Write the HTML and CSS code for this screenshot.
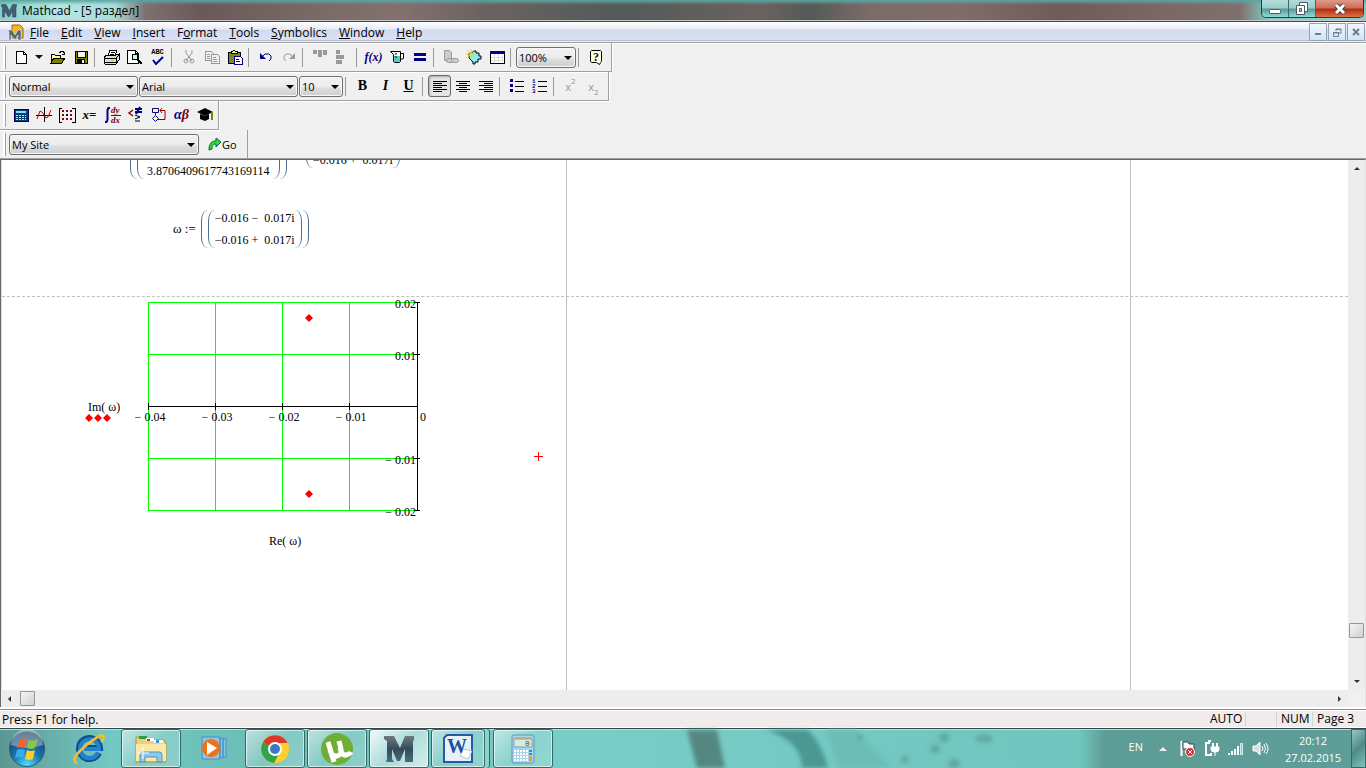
FILE: index.html
```
<!DOCTYPE html>
<html lang="en">
<head>
    <meta charset="UTF-8">
    <meta name="viewport" content="width=device-width, initial-scale=1.0">
    <title>Mathcad - [5 раздел]</title>
    <link rel="stylesheet" href="styles.css">
</head>
<body>
    <header class="titlebar">
        <svg class="app-icon" width="16" height="16" viewBox="0 0 32 30"><path d="M1 2h9l7 13 6-13h8v4l-1 2v19h-7V14l-6 12h-3L7 14v13H3V7L1 6z" fill="#3f6173" stroke="#28414e"/></svg>
        <h1>Mathcad - [5 раздел]</h1>
        <div class="window-buttons">
            <button class="wb" aria-label="Minimize"><svg width="14" height="12" viewBox="0 0 14 12"><rect x="1.500" y="6.500" width="11" height="4" rx="1" fill="#fff" stroke="#4b5a66"/></svg></button>
            <button class="wb" aria-label="Restore"><svg width="14" height="13" viewBox="0 0 14 13"><path d="M4.500.5h8v9h-8z" fill="#fff" stroke="#4b5a66"/><path d="M1.500 3.500h8v9h-8z" fill="#fff" stroke="#4b5a66"/><path d="M4.500 6.500h2v3h-2z" fill="#7fb" stroke="#4b5a66"/></svg></button>
            <button class="wb wb-close" aria-label="Close"><svg width="14" height="12" viewBox="0 0 14 12"><path d="M3 2l8 8M11 2l-8 8" stroke="#4b3a46" stroke-width="5"/><path d="M3 2l8 8M11 2l-8 8" stroke="#fff" stroke-width="3"/></svg></button>
        </div>
    </header>

    <nav class="menubar">
        <svg class="doc-icon" width="17" height="17" viewBox="0 0 17 17"><path d="M5 1h8l3 3v10H5z" fill="#f7b321" stroke="#9c6a05"/><path d="M1 6h4l3 5 3-5h3v10h-3v-5l-3 5-4-5v5H2V8z" fill="#4f6875" stroke="#e8eef0" stroke-width=".6"/></svg>
        <a href="#"><u>F</u>ile</a>
        <a href="#"><u>E</u>dit</a>
        <a href="#"><u>V</u>iew</a>
        <a href="#"><u>I</u>nsert</a>
        <a href="#">F<u>o</u>rmat</a>
        <a href="#"><u>T</u>ools</a>
        <a href="#"><u>S</u>ymbolics</a>
        <a href="#"><u>W</u>indow</a>
        <a href="#"><u>H</u>elp</a>
        <div class="mdi-buttons">
            <button aria-label="Minimize document"><svg width="8" height="8"><path d="M1 5h6v2H1z" fill="#6c7f92"/></svg></button>
            <button aria-label="Restore document"><svg width="9" height="9" fill="none" stroke="#6c7f92"><path d="M3 3V1h5v4H6M3 1.500h5M.5 4.500h5v4h-5zM.5 5h5"/></svg></button>
            <button aria-label="Close document"><svg width="8" height="8"><path d="M1 1l6 6M7 1L1 7" stroke="#6c7f92" stroke-width="2"/></svg></button>
        </div>
    </nav>

    <main>
        <div class="toolbars">
            <!-- standard -->
            <div class="toolbar w-standard">
                <button class="tb" aria-label="New"><svg width="16" height="16" class="px"><path d="M3 2h7l3 3v9H3z" fill="#fff" stroke="#000"/><path d="M10 2v3h3" fill="none" stroke="#000"/></svg></button>
                <button class="tb tb-drop" aria-label="New from template"><i class="arrow"></i></button>
                <button class="tb" aria-label="Open"><svg width="16" height="16" class="px"><path d="M1 13V5h3l1 1h5v3" fill="#ffffa0" stroke="#000"/><path d="M1 14l3-5h11l-3 5z" fill="#808000" stroke="#000"/><path d="M9 3h1V2h3v1h1v3M12 5h3" fill="none" stroke="#000"/></svg></button>
                <button class="tb" aria-label="Save"><svg width="16" height="16" class="px"><path d="M2 2h12v12H2z" fill="#808000" stroke="#000"/><path d="M4 2h8v6H4z" fill="#f0f0f0" stroke="#000"/><path d="M4 10h8v4H4z"/><path d="M9 11h2v3H9z" fill="#eee"/></svg></button>
                <span class="sep"></span>
                <button class="tb" aria-label="Print"><svg width="17" height="16" class="px"><path d="M5 7l2-6h7l-2 6" fill="#fff" stroke="#000"/><path d="M8 3h4M7 5h4" stroke="#000"/><path d="M1 8l3-2h9l3-1v6l-3 4H2l-1-2z" fill="#ddd" stroke="#000"/><path d="M1 9h12v4H2M13 9l3-3" fill="none" stroke="#000"/><path d="M8 11h3" stroke="#cc0" /></svg></button>
                <button class="tb" aria-label="Print Preview"><svg width="17" height="16" class="px"><path d="M1 1h8l3 3v10H1z" fill="#fff" stroke="#000"/><path d="M9 1v3h3" fill="none" stroke="#000"/><circle cx="9" cy="8" r="3" fill="#bff" stroke="#000"/><path d="M11 10l5 5" stroke="#000" stroke-width="2"/></svg></button>
                <button class="tb tb-spell" aria-label="Spelling"><span>ABC</span><svg width="12" height="10"><path d="M1 4l3 4 7-7" fill="none" stroke="#000080" stroke-width="2"/></svg></button>
                <span class="sep"></span>
                <button class="tb" aria-label="Cut"><svg width="16" height="16" fill="none" stroke="#999"><path d="M5 1v3l6 8M11 1v3L5 12"/><circle cx="5" cy="12" r="2"/><circle cx="11" cy="12" r="2"/></svg></button>
                <button class="tb" aria-label="Copy"><svg width="16" height="16" class="px"><g fill="#f0f0f0" stroke="#999"><path d="M1 2h6l2 2v7H1z"/><path d="M7 5h6l2 2v7H7z"/><path d="M3 5h3M3 7h3M3 9h3M9 8h3M9 10h4M9 12h4"/></g></svg></button>
                <button class="tb" aria-label="Paste"><svg width="16" height="16" class="px"><path d="M1 3h12v11H1z" fill="#808040" stroke="#000"/><path d="M4 4V2h2l1-1 1 1h2v2z" fill="#ff6" stroke="#000"/><path d="M7 7h6l2 2v6H7z" fill="#fff" stroke="#000080"/><path d="M9 10h3M9 12h4" stroke="#000080"/></svg></button>
                <span class="sep"></span>
                <button class="tb" aria-label="Undo"><svg width="16" height="16"><path d="M2 4v6h6z" fill="#000080"/><path d="M4 8l3-3h4l2 2v3l-2 2" fill="none" stroke="#000080"/></svg></button>
                <button class="tb" aria-label="Redo"><svg width="16" height="16"><path d="M14 4v6H8z" fill="#999"/><path d="M12 8L9 5H5L3 7v3l2 2" fill="none" stroke="#999"/></svg></button>
                <span class="sep"></span>
                <button class="tb" aria-label="Align Across"><svg width="16" height="16" fill="#999"><path d="M1 1h4v4H1zM6 1h4v7H6zM11 1h4v5h-4z"/></svg></button>
                <button class="tb" aria-label="Align Down"><svg width="16" height="16" fill="#999"><path d="M1 1h4v4H1zM1 6h8v4H1zM1 11h6v4H1z"/></svg></button>
                <span class="sep"></span>
                <button class="tb tb-fx">f(x)</button>
                <button class="tb" aria-label="Insert Unit"><svg width="16" height="16"><path d="M1.500 2.500h10v2h3v5l-3 1v2l-1 1h-5l-1-1v-7z" fill="#fff" stroke="#000"/><path d="M5 7h6v6H5z" fill="#5cc"/><path d="M11.500 4v7M6 5h2M6 8h2" fill="none" stroke="#000"/></svg></button>
                <button class="tb" aria-label="Calculate"><svg width="16" height="16" fill="#000080"><path d="M2 4h12v3H2zM2 9h12v3H2z"/></svg></button>
                <span class="sep"></span>
                <button class="tb" aria-label="Insert Hyperlink"><svg width="16" height="16" fill="#ccc" stroke="#999"><path d="M1.500 1.500h5l2 2v8h-7z"/><rect x="3.500" y="9.500" width="7" height="4" rx="2"/><rect x="8.500" y="9.500" width="7" height="4" rx="2"/></svg></button>
                <button class="tb" aria-label="Component Wizard"><svg width="16" height="16"><path d="M3 4h3l1-2h3v2h3l0 3h2v3h-3v3H9v2H7v-2L3 9z" fill="#8ee" stroke="#000"/><path d="M1 1l8 8M8 1L2 8M5 0v9M0 5h9" stroke="#e6d820"/></svg></button>
                <button class="tb" aria-label="Insert Table"><svg width="16" height="16" class="px"><path d="M1 2h14v12H1z" fill="#fff" stroke="#000"/><path d="M1 2h14v2H1z" fill="#000080" stroke="#000080"/><path d="M5 5v8M9 5v8M13 5v8M2 8h12M2 11h12" stroke="#ddd"/></svg></button>
                <span class="sep"></span>
                <label class="combo w-zoom"><select aria-label="Zoom"><option>100%</option></select></label>
                <span class="sep"></span>
                <button class="tb" aria-label="Help"><svg width="16" height="17"><path d="M3.500 1.500h9l1 1v10l-1 1-1 2-3-2h-5l-1-1v-10z" fill="#ffffd0" stroke="#000"/><text x="5" y="12" class="help-mark">?</text></svg></button>
            </div>

            <!-- formatting -->
            <div class="toolbar w-format">
                <label class="combo w-style"><select aria-label="Style"><option>Normal</option></select></label>
                <label class="combo w-font"><select aria-label="Font"><option>Arial</option></select></label>
                <label class="combo w-size"><select aria-label="Font size"><option>10</option></select></label>
                <span class="sep"></span>
                <button class="tb tb-letter">B</button>
                <button class="tb tb-letter italic">I</button>
                <button class="tb tb-letter underline">U</button>
                <span class="sep"></span>
                <button class="tb active" aria-label="Align Left"><svg width="16" height="16" class="px" stroke="#000"><path d="M1 3h14M1 5h9M1 7h14M1 9h9M1 11h14M1 13h9"/></svg></button>
                <button class="tb" aria-label="Align Center"><svg width="16" height="16" class="px" stroke="#000"><path d="M1 3h14M4 5h8M1 7h14M4 9h8M1 11h14M4 13h8"/></svg></button>
                <button class="tb" aria-label="Align Right"><svg width="16" height="16" class="px" stroke="#000"><path d="M1 3h14M6 5h9M1 7h14M6 9h9M1 11h14M6 13h9"/></svg></button>
                <span class="sep"></span>
                <button class="tb" aria-label="Bullets"><svg width="16" height="16" class="px"><path d="M1 1h3v3H1zM1 6h3v3H1zM1 11h3v3H1z" fill="#000080"/><path d="M6 3h9M6 8h9M6 13h9" stroke="#000"/></svg></button>
                <button class="tb" aria-label="Numbering"><svg width="16" height="16" class="px"><g class="list-nums"><text x="0" y="5">1</text><text x="0" y="10">2</text><text x="0" y="15">3</text></g><path d="M6 3h9M6 8h9M6 13h9" stroke="#000"/></svg></button>
                <span class="sep"></span>
                <button class="tb tb-script">x<sup>2</sup></button>
                <button class="tb tb-script">x<sub>2</sub></button>
            </div>

            <!-- math palettes -->
            <div class="toolbar w-math">
                <button class="tb" aria-label="Calculator"><svg width="16" height="16" class="px"><path d="M1 2h14v12H1z" fill="#047" stroke="#000060"/><path d="M3 4h10v2H3z" fill="#8df"/><path d="M3 8h10M3 10h10M3 12h10" stroke="#9ef" stroke-dasharray="2 1"/></svg></button>
                <button class="tb" aria-label="Graph"><svg width="16" height="16" fill="none"><path d="M0 8.500h16M8.500 0v15" stroke="#000"/><path d="M1 12L4 4l2 1 4 6 2-1 3-7" stroke="#d00000"/></svg></button>
                <button class="tb" aria-label="Matrix"><svg width="18" height="16" class="px"><path d="M4 1H1v14h3M14 1h3v14h-3" fill="none" stroke="#000"/><path d="M4 4h11M4 8h11M4 12h11" stroke="#900000" stroke-width="2" stroke-dasharray="2 2"/><path d="M8 8h2" stroke="#000080" stroke-width="2"/></svg></button>
                <button class="tb tb-eq"><i>x</i>=</button>
                <button class="tb" aria-label="Calculus"><svg width="17" height="18"><path d="M6 2H4.500L3.500 4v10l-1 2H1" fill="none" stroke="#000080" stroke-width="2"/><path d="M7 9.500h10" stroke="#800000"/><text x="7" y="7" class="frac">dy</text><text x="7" y="17" class="frac">dx</text></svg></button>
                <button class="tb" aria-label="Boolean"><svg width="17" height="18" fill="none"><path d="M6 4L2 7l4 3" stroke="#900000" stroke-width="1.500"/><path d="M8 3h7M8 6h7M13 1L9 8" stroke="#000080" stroke-width="2"/><path d="M8 9l5 2-5 2M8 15h5" stroke="#000"/></svg></button>
                <button class="tb" aria-label="Programming"><svg width="16" height="16"><path d="M1.500 1.500h6v4h-6zM4.500 8.500l3 3-3 3-3-3z" fill="#ff9" stroke="#000080"/><path d="M4.500 5v3M7 12.500h7v-9H9M11 1L9 3.500 11 6" fill="none" stroke="#900000"/></svg></button>
                <button class="tb tb-greek">α<b>β</b></button>
                <button class="tb" aria-label="Symbolic"><svg width="18" height="16"><path d="M1 5l8-4 8 4-8 4z"/><path d="M4 7v5l5 2 4-2V7L9 9z"/><path d="M16 5v8" stroke="#808000" stroke-width="2"/></svg></button>
            </div>

            <!-- resources -->
            <div class="toolbar w-site">
                <label class="combo w-address"><select aria-label="Resource"><option>My Site</option></select></label>
                <button class="go"><svg width="14" height="14"><path d="M1 13C1 6 4 4 8 4V1l5 4-5 5V7C5 7 4 8 4 12z" fill="#3d3" stroke="#064"/></svg>Go</button>
            </div>
        </div>

        <section class="workspace">
            <div class="sheet">
                <div class="page-line first"></div>
                <div class="page-line second"></div>
                <div class="page-break"></div>

                <div class="math clipped-vector">
                    <span class="paren open"></span><span class="paren open"></span>
                    <span class="column"><span>3.8706409617743169114</span></span>
                    <span class="paren close"></span><span class="paren close"></span>
                </div>
                <div class="math clipped-result">
                    <span class="paren open"></span>
                    <span class="column"><span>−0.016 + &nbsp;0.017i</span></span>
                    <span class="paren close"></span>
                </div>
                <div class="math omega">
                    <span class="name">ω :=</span>
                    <span class="paren open"></span><span class="paren open"></span>
                    <span class="column"><span>−0.016 − &nbsp;0.017i</span><span>−0.016 + &nbsp;0.017i</span></span>
                    <span class="paren close"></span><span class="paren close"></span>
                </div>

                <svg class="plot" width="350" height="256" viewBox="0 0 350 256">
                    <path class="grid" d="M64 6v208M131 6v208M198 6v208M265 6v208M64 6h269M64 58h269M64 162h269M64 214h269"/>
                    <path class="axis" d="M64 110h270M333 6v208M64 107v7M131 107v7M198 107v7M265 107v7M330 6h6M330 58h6M330 162h6M330 214h6"/>
                    <g class="x-labels">
                        <text x="66" y="125">− 0.04</text>
                        <text x="133" y="125">− 0.03</text>
                        <text x="200" y="125">− 0.02</text>
                        <text x="267" y="125">− 0.01</text>
                        <text x="339" y="125">0</text>
                    </g>
                    <g class="y-labels">
                        <text x="332" y="12">0.02</text>
                        <text x="332" y="64">0.01</text>
                        <text x="332" y="168">− 0.01</text>
                        <text x="332" y="220">− 0.02</text>
                    </g>
                    <g class="points">
                        <path d="M221 22l4-4 4 4-4 4z"/>
                        <path d="M221 198l4-4 4 4-4 4z"/>
                        <path d="M1 122l4-4 4 4-4 4z"/>
                        <path d="M10 122l4-4 4 4-4 4z"/>
                        <path d="M19 122l4-4 4 4-4 4z"/>
                    </g>
                    <text x="4" y="115">Im( ω)</text>
                    <text x="185" y="249">Re( ω)</text>
                </svg>

                <svg class="crosshair" width="9" height="9"><path d="M0 4.500h9M4.500 0v9" stroke="#f00"/></svg>
            </div>
            <div class="vscroll">
                <button class="scroll-btn" aria-label="Scroll up"><i class="arrow up"></i></button>
                <div class="thumb"></div>
                <button class="scroll-btn" aria-label="Scroll down"><i class="arrow down"></i></button>
            </div>
            <div class="hscroll">
                <button class="scroll-btn" aria-label="Scroll left"><i class="arrow left"></i></button>
                <div class="thumb"></div>
                <button class="scroll-btn" aria-label="Scroll right"><i class="arrow right"></i></button>
            </div>
            <div class="scroll-corner"></div>
        </section>
    </main>

    <div class="statusbar">
        <span class="hint">Press F1 for help.</span>
        <span class="cell auto">AUTO</span>
        <span class="cell blank"></span>
        <span class="cell num">NUM</span>
        <span class="cell page">Page 3</span>
    </div>

    <footer class="taskbar">
        <svg class="wallpaper" viewBox="0 0 600 40" preserveAspectRatio="none">
            <path d="M127 0h30l8 40h-28z" fill="#548781"/>
            <path d="M206 0h42q14 14 20 40h-26q0-28-36-40z" fill="#4b9793"/>
            <path d="M266 0h30l36 40h-54z" fill="#6dbdb7"/>
            <g fill="#5a9c94" opacity=".7"><circle cx="384" cy="8" r="5"/><circle cx="375" cy="20" r="5"/><ellipse cx="424" cy="9" rx="9" ry="4"/><circle cx="345" cy="31" r="4"/><circle cx="394" cy="36" r="6"/><circle cx="300" cy="8" r="3"/></g>
        </svg>
        <button class="start" aria-label="Start">
            <svg width="38" height="38" viewBox="0 0 38 38">
                <defs><radialGradient id="orb" cx=".5" cy=".95" r=".9"><stop offset="0" stop-color="#4de0ff"/><stop offset=".45" stop-color="#1878b4"/><stop offset="1" stop-color="#173e63"/></radialGradient></defs>
                <circle cx="19" cy="19" r="17.500" fill="url(#orb)" stroke="#2b5a78"/>
                <path d="M3 15a16 16 0 0 1 32 0q-16 6-32 0z" fill="#fff" opacity=".35"/>
                <path d="M12 10q4-3 7-1l-2 9q-4-2-8 0z" fill="#f2652a"/><path d="M21 10q4 2 9-1l-3 9q-4 2-8 0z" fill="#8ec63f"/>
                <path d="M9 20q4-2 8 0l-2 8q-4-2-8 0z" fill="#3fa9f0"/><path d="M19 20q4 2 8 0l-2 9q-4 2-8 0z" fill="#ffcb2d"/>
            </svg>
        </button>
        <button class="task" aria-label="Internet Explorer"><svg width="34" height="32" viewBox="0 0 34 32"><path d="M27 20a10.500 10.500 0 1 1 1-5H12" fill="none" stroke="#0d4f96" stroke-width="6"/><path d="M26 20a9.500 9.500 0 1 1 1-4H12" fill="none" stroke="#2183cc" stroke-width="4"/><path d="M5 30q-7-3 5-14T30 2q4 2-1 7" fill="none" stroke="#f4bd2c" stroke-width="2.500"/></svg></button>
        <button class="task open" aria-label="Windows Explorer"><svg width="34" height="32" viewBox="0 0 34 32"><path d="M2 4h9l2 3h17l2 3v19H2z" fill="#ecd27b" stroke="#b5913d"/><path d="M5 3h8v3H5z" fill="#2c9f3c"/><path d="M12 5h8v3h-8z" fill="#fff"/><path d="M13 6h3v2h-3z" fill="#c33"/><path d="M20 7h9v3h-9z" fill="#fff"/><path d="M22 7h3v3h-3z" fill="#39c"/><path d="M2 11h30v17H2z" fill="#f9e9a8"/><path d="M6 29v-7q0-3 3-3h16q3 0 3 3v7h-5v-5H11v5z" fill="#8fc9ea" stroke="#4c93bd"/><path d="M9 14v12M4 20h11" stroke="#fff"/></svg></button>
        <button class="task" aria-label="Media Player"><svg width="30" height="28" viewBox="0 0 30 28"><path d="M4 2h18v22H4zM22 3h3v20h-3zM25 4h3v18h-3z" fill="#8dc5e4" stroke="#4a8db8"/><circle cx="13" cy="13" r="9" fill="#ee7018"/><path d="M9 7l10 6-10 7z" fill="#fff"/></svg></button>
        <button class="task open" aria-label="Chrome"><svg width="30" height="30" viewBox="0 0 30 30"><circle cx="15" cy="15" r="14" fill="#ffd02a"/><path d="M3 8a14 14 0 0 0 11 21l6-11-5-3z" fill="#33a34b"/><path d="M15 15L3 8a14 14 0 0 1 24.500 1H15z" fill="#dd382c"/><circle cx="15" cy="15" r="7" fill="#fff"/><circle cx="15" cy="15" r="5" fill="#3879c0"/></svg></button>
        <button class="task open" aria-label="uTorrent"><svg width="34" height="34" viewBox="0 0 34 34"><circle cx="17" cy="17" r="16" fill="#6fae35"/><path d="M8 10l6 20M10 18q2 7 7 6t4-7l-2-8M20 16q2 8 6 7t5-3" fill="none" stroke="#fff" stroke-width="5"/></svg></button>
        <button class="task open current" aria-label="Mathcad"><svg width="32" height="30" viewBox="0 0 32 30"><defs><linearGradient id="m" x2="0" y2="1"><stop offset="0" stop-color="#707b82"/><stop offset=".5" stop-color="#344b5a"/><stop offset="1" stop-color="#4a6c80"/></linearGradient></defs><path d="M1 2h10l6 12 5-12h9v4l-1 1v21h-8V15l-5 12h-3L9 15v10l2 3H3l1-3V7L1 5z" fill="url(#m)"/></svg></button>
        <button class="task open stacked" aria-label="Word"><svg width="30" height="31" viewBox="0 0 30 31"><path d="M4 2h25v27H1V5z" fill="#e7f0fb" stroke="#2857a3" stroke-width="2"/><path d="M20 16l9 2-4 8-8-3z" fill="#fff" stroke="#acc"/><text x="4" y="20" class="word-mark">W</text></svg></button>
        <button class="task open" aria-label="Calculator"><svg width="24" height="30" viewBox="0 0 24 30"><rect x="1" y="1" width="22" height="28" rx="2" fill="#a9d4ee" stroke="#5b96be"/><path d="M3 3h18v2H3z" fill="#f3a64a"/><path d="M3 5h18v8H3z" fill="#d8ecdc" stroke="#7aa"/><text x="14" y="12" class="calc-mark">0</text><path d="M3 17h14M3 20h14M3 23h14M3 26h14" stroke="#fff" stroke-width="2" stroke-dasharray="2 1"/><path d="M18 17h3M18 20h3" stroke="#4a88b0" stroke-width="2"/><path d="M18 22h3v5h-3z" fill="#f39a2b"/></svg></button>

        <div class="tray">
            <span class="lang">EN</span>
            <i class="arrow up light"></i>
            <svg width="18" height="18"><path d="M2.500 1v15" stroke="#fff" stroke-width="2"/><path d="M4 2h5l1 2h5v6h-5L9 9H4z" fill="#fff" stroke="#345"/><circle cx="11" cy="12" r="4.500" fill="#d8322c" stroke="#fff"/><path d="M9 10l4 4M13 10l-4 4" stroke="#fff"/></svg>
            <svg width="18" height="18" fill="none" stroke="#fff"><path d="M7 3H3v12h5v-2M5 1h3" stroke-width="2"/><path d="M10 3v4M14 3v4" stroke-width="2"/><path d="M8 7h8v2q0 3-3 3h-2q-3 0-3-3zM12 12v4" fill="#fff"/></svg>
            <svg width="18" height="18" fill="#fff"><path d="M1 13h2v2H1zM4 11h2v4H4zM7 9h2v6H7zM10 6h2v9h-2z"/><path d="M13.500 3.500h2v11h-2z" fill="#8cb" stroke="#cee"/></svg>
            <svg width="18" height="18" fill="none" stroke="#fff"><path d="M2 6h3l4-4v13l-4-4H2z" fill="#ddd"/><path d="M11 6q2 3 0 5M13 4q3 5 0 9M15 3q4 6 0 11"/></svg>
            <div class="clock"><span>20:12</span><span>27.02.2015</span></div>
        </div>
        <button class="show-desktop" aria-label="Show desktop"></button>
    </footer>
</body>
</html>
```
FILE: styles.css
```
* {
    box-sizing: border-box;
}
body {
    margin: 0;
    height: 100vh;
    display: flex;
    flex-direction: column;
    overflow: hidden;
    background: #f0f0f0;
    color: #000;
    font-family: "Open Sans", "Noto Sans", sans-serif;
    font-size: 12px;
}
button {
    padding: 0;
    border: none;
    background: none;
    font: inherit;
    color: inherit;
}
a {
    color: inherit;
    text-decoration: none;
}
svg {
    display: block;
    flex: none;
}
.px {
    shape-rendering: crispEdges;
}

/* title bar */
.titlebar {
    flex: none;
    height: 22px;
    display: flex;
    align-items: center;
    border-bottom: 1px solid #414a4d;
    box-shadow: inset 0 -1px #c4c9ca;
    background:
        linear-gradient(#5aa5a0, rgba(90, 165, 160, 0) 5px),
        linear-gradient(90deg, #83cfcb 0, #b5e6e3 60px, #a7dcd9 115px, #7e7170 145px, #6c5858 200px, #7b6b69 330px, #84706f 400px, #6c6361 480px, #535a58 620px, #6b625f 760px, #545a57 810px, #7c6b69 870px, #806c6a 960px, #6e5b5a 1060px, #7b6764 1160px, #80706d 1240px, #7fd0ca 1270px);
}
.app-icon {
    margin: 0 5px 0 1px;
}
.titlebar h1 {
    margin: 0;
    font-size: 12px;
    font-weight: 400;
    line-height: 20px;
}
.window-buttons {
    display: flex;
    align-self: flex-start;
    margin: 0 2px 0 auto;
    height: 18px;
    border: 1px solid #243b40;
    border-top: none;
    border-radius: 0 0 5px 5px;
    overflow: hidden;
}
.wb {
    width: 27px;
    display: flex;
    align-items: center;
    justify-content: center;
    border-right: 1px solid #3c6a6c;
    background: linear-gradient(#b4dcda 0, #9ccbc9 8px, #569c9a 9px, #8fdad4);
}
.wb-close {
    width: 47px;
    border-right: none;
    background: linear-gradient(#dd9a8b 0, #cf6b57 8px, #b02c12 9px, #dd7048);
}

/* menu */
.menubar {
    flex: none;
    height: 22px;
    display: flex;
    align-items: center;
    padding-left: 7px;
    border-bottom: 1px solid #fff;
    box-shadow: inset 0 -1px #9d9d9d, inset 0 -2px #f0f0f0, inset 0 -3px #b6bccc;
    background: linear-gradient(#fff, #e8ebf5 7px, #d3daee 8px, #dee4f7);
}
.doc-icon {
    margin-right: 6px;
}
.menubar a {
    margin-right: 12px;
    line-height: 18px;
}
.mdi-buttons {
    display: flex;
    gap: 1px;
    align-self: flex-start;
    margin: 1px 1px 0 auto;
}
.mdi-buttons button {
    width: 18px;
    height: 18px;
    display: flex;
    align-items: center;
    justify-content: center;
    border: 1px solid #92a4b8;
    background: linear-gradient(#f1f7fd, #d3e4f5);
}

/* toolbars */
main {
    flex: 1;
    min-height: 0;
    display: flex;
    flex-direction: column;
}
.toolbars {
    flex: none;
    margin-top: -1px;
}
.toolbar {
    height: 29px;
    display: flex;
    align-items: center;
    padding-left: 3px;
    border-right: 1px solid #a0a0a0;
    border-bottom: 1px solid #a0a0a0;
    box-shadow: 0 1px #fff, 1px 0 #fff;
}
.toolbar::before {
    content: "";
    align-self: stretch;
    width: 2px;
    margin: 3px 3px 2px 0;
    border-right: 1px solid #a0a0a0;
    background: #fff;
}
.toolbar:last-child {
    border-bottom-color: transparent;
    box-shadow: none;
}
.w-standard {
    width: 612px;
}
.w-format {
    width: 609px;
}
.w-math {
    width: 219px;
}
.w-site {
    width: 248px;
}
.tb {
    flex: none;
    width: 23px;
    height: 22px;
    display: flex;
    align-items: center;
    justify-content: center;
    overflow: hidden;
}
.tb-drop {
    width: 14px;
}
.active {
    border: 1px solid #6a6a6a;
    border-radius: 3px;
    background: #e4e4e4;
    box-shadow: inset 1px 1px 2px #aaa;
}
.sep {
    flex: none;
    width: 8px;
    height: 19px;
    background: linear-gradient(#999, #999) 2px 0 / 1px 100% no-repeat;
}
.arrow {
    border: 4px solid transparent;
    border-top-color: #111;
    border-bottom: none;
}
.arrow.up {
    border: 3px solid transparent;
    border-bottom-color: #333;
    border-top: none;
}
.arrow.down {
    border: 3px solid transparent;
    border-top-color: #333;
    border-bottom: none;
}
.arrow.left {
    border: 3px solid transparent;
    border-right-color: #333;
    border-left: none;
}
.arrow.right {
    border: 3px solid transparent;
    border-left-color: #333;
    border-right: none;
}
.arrow.light {
    border-width: 0 4px 4px;
    border-bottom-color: #eee;
}
.tb-spell {
    flex-direction: column;
    font: bold 7px/7px "Liberation Mono", monospace;
}
.tb-fx {
    color: #000080;
    font: italic bold 12px "Liberation Serif", serif;
}
.tb-letter {
    font: bold 14px "Liberation Serif", serif;
}
.italic {
    font-style: italic;
}
.underline {
    text-decoration: underline;
}
.tb-script {
    color: #999;
    font-size: 11px;
}
.tb-script sup,
.tb-script sub {
    align-self: flex-start;
    font-size: 8px;
}
.tb-script sub {
    align-self: flex-end;
}
.tb-eq {
    color: #000080;
    font: bold 13px "Liberation Serif", serif;
}
.tb-eq i {
    color: #000;
}
.tb-greek {
    color: #000080;
    font: italic bold 14px "Liberation Serif", serif;
}
.tb-greek b {
    color: #800000;
}
.help-mark {
    fill: #000080;
    font: bold 12px "Liberation Serif", serif;
}
.list-nums {
    fill: #000080;
    font: bold 6px "Liberation Mono", monospace;
}
.frac {
    fill: #800000;
    font: italic bold 9px "Liberation Serif", serif;
}
.combo {
    position: relative;
    flex: none;
    margin-right: 1px;
}
.combo::after {
    content: "";
    position: absolute;
    right: 4px;
    top: 9px;
    border: 4px solid transparent;
    border-top-color: #000;
    border-bottom: none;
    pointer-events: none;
}
.combo select {
    display: block;
    width: 100%;
    height: 21px;
    padding: 0 2px;
    appearance: none;
    border: 1px solid #707070;
    border-radius: 3px;
    background: linear-gradient(#f2f2f2, #ebebeb 10px, #dddddd 11px, #cfcfcf);
    box-shadow: inset 0 0 0 1px #f8f8f8;
    color: #000;
    font: 11px "Open Sans", "Noto Sans", sans-serif;
}
.w-style {
    width: 129px;
}
.w-font {
    width: 159px;
}
.w-size {
    width: 44px;
    margin-right: 0;
}
.w-zoom {
    width: 60px;
    margin-right: 0;
}
.w-address {
    width: 190px;
}
.go {
    display: flex;
    align-items: center;
    margin-left: 8px;
    font-size: 11px;
}

/* worksheet */
.workspace {
    flex: 1;
    min-height: 0;
    display: grid;
    grid-template-columns: 1fr 17px;
    grid-template-rows: 1fr 17px;
    border: solid #696969;
    border-width: 1px 1px 0;
    border-right-color: #e3e3e3;
    box-shadow: 0 -1px #a0a0a0;
}
.sheet {
    position: relative;
    overflow: hidden;
    border-left: 1px solid #ddd;
    background: #fff;
}
.page-line {
    position: absolute;
    top: 0;
    bottom: 0;
    width: 1px;
    background: #c0c0c0;
}
.first {
    left: 564px;
}
.second {
    left: 1128px;
}
.page-break {
    position: absolute;
    top: 136px;
    left: 0;
    right: 0;
    border-top: 1px dashed #c0c0c0;
}
.math {
    position: absolute;
    display: flex;
    align-items: center;
    font: 12px/22px "Liberation Serif", serif;
    white-space: nowrap;
}
.paren {
    width: 7px;
    height: 38px;
}
.paren.open {
    border-left: 1px solid #4f6f90;
    border-radius: 8px / 12px;
    border-top-right-radius: 0;
    border-bottom-right-radius: 0;
}
.paren.close {
    border-right: 1px solid #4f6f90;
    border-radius: 8px / 12px;
    border-top-left-radius: 0;
    border-bottom-left-radius: 0;
}
.column {
    display: flex;
    flex-direction: column;
    justify-content: flex-end;
    height: 44px;
}
.omega {
    left: 171px;
    top: 47px;
}
.omega .name {
    margin-right: 5px;
    font-size: 13px;
}
.clipped-vector {
    left: 128px;
    top: -22px;
}
.clipped-vector .column {
    padding: 0 3px;
}
.clipped-result {
    left: 304px;
    top: -33px;
}
.plot {
    position: absolute;
    left: 82px;
    top: 136px;
    font: 12px "Liberation Serif", serif;
}
.grid,
.axis {
    fill: none;
    stroke: #00ff00;
    shape-rendering: crispEdges;
}
.axis {
    stroke: #000;
}
.x-labels {
    text-anchor: middle;
}
.y-labels {
    text-anchor: end;
}
.points {
    fill: #ff0000;
}
.crosshair {
    position: absolute;
    left: 532px;
    top: 292px;
}

/* scroll bars */
.vscroll,
.hscroll {
    display: flex;
    align-items: center;
    background: #ededed;
}
.vscroll {
    flex-direction: column;
}
.scroll-btn {
    width: 17px;
    height: 17px;
    display: flex;
    align-items: center;
    justify-content: center;
}
.thumb {
    width: 15px;
    height: 15px;
    border: 1px solid #979797;
    border-radius: 1px;
    background: linear-gradient(135deg, #f5f5f5, #d0d0d0);
}
.vscroll .thumb {
    margin: auto 0 35px;
}
.hscroll .thumb {
    margin: 0 auto 0 2px;
}
.scroll-corner {
    background: #f0f0f0;
}

/* status bar */
.statusbar {
    flex: none;
    height: 21px;
    display: flex;
    align-items: center;
    padding-top: 2px;
    border-top: 2px solid #fff;
    border-bottom: 1px solid #fff;
    box-shadow: inset 0 1px #8d8d8d, inset 0 2px #fff;
    background: #f0eceb;
}
.hint {
    flex: 1;
    padding-left: 2px;
}
.cell {
    height: 16px;
    line-height: 16px;
    border-right: 1px solid #d5d2d0;
}
.auto {
    width: 36px;
}
.blank {
    width: 31px;
}
.num {
    width: 36px;
    padding-left: 4px;
}
.page {
    width: 53px;
    padding-left: 4px;
    border-right: none;
}

/* taskbar */
.taskbar {
    position: relative;
    flex: none;
    height: 40px;
    display: flex;
    align-items: stretch;
    border-top: 1px solid #2c4a4c;
    box-shadow: inset 0 1px #b5e2df;
    background: linear-gradient(90deg, #5a9791 0, #69aea8 50px, #72c8c2 110px, #6cbeb7 250px, #78cdc7 570px, #71c5bf 1080px, #5e9c96 1105px, #5e9e98 100%);
}
.wallpaper {
    position: absolute;
    left: 560px;
    top: 1px;
    width: 600px;
    height: 38px;
    filter: blur(2px);
}
.start {
    width: 54px;
    display: flex;
    align-items: center;
    justify-content: center;
    margin-right: 5px;
}
.task {
    width: 60px;
    margin-right: 2px;
    display: flex;
    align-items: center;
    justify-content: center;
}
.task.open {
    border: 1px solid #33686a;
    border-radius: 3px;
    box-shadow: inset 0 0 0 1px rgba(255, 255, 255, 0.6);
    background: linear-gradient(135deg, rgba(255, 255, 255, 0.55), rgba(255, 255, 255, 0.15) 50%, rgba(255, 255, 255, 0.2));
}
.task.current {
    background: linear-gradient(135deg, rgba(255, 255, 255, 0.9), rgba(255, 255, 255, 0.4) 50%, rgba(255, 255, 255, 0.7));
}
.task.stacked {
    width: 54px;
    margin-right: 8px;
    box-shadow: inset 0 0 0 1px rgba(255, 255, 255, 0.6), 4px 0 #8fd2ce, 5px 0 #33686a;
}
.word-mark {
    fill: #1c4fa0;
    font: bold 20px "Liberation Serif", serif;
}
.calc-mark {
    fill: #345;
    font: 8px "Liberation Mono", monospace;
}
.tray {
    position: relative;
    display: flex;
    align-items: center;
    gap: 6px;
    margin-left: auto;
    color: #fff;
}
.lang {
    margin: 0 10px 4px 0;
    font-size: 11px;
}
.tray .light {
    margin-right: 6px;
}
.clock {
    width: 76px;
    display: flex;
    flex-direction: column;
    text-align: center;
    font-size: 11px;
    line-height: 17px;
}
.show-desktop {
    width: 15px;
    border: 1px solid #37686a;
    background: linear-gradient(135deg, #9cc6c3, #4f8c88 50%, #7fc4bf);
}
```
